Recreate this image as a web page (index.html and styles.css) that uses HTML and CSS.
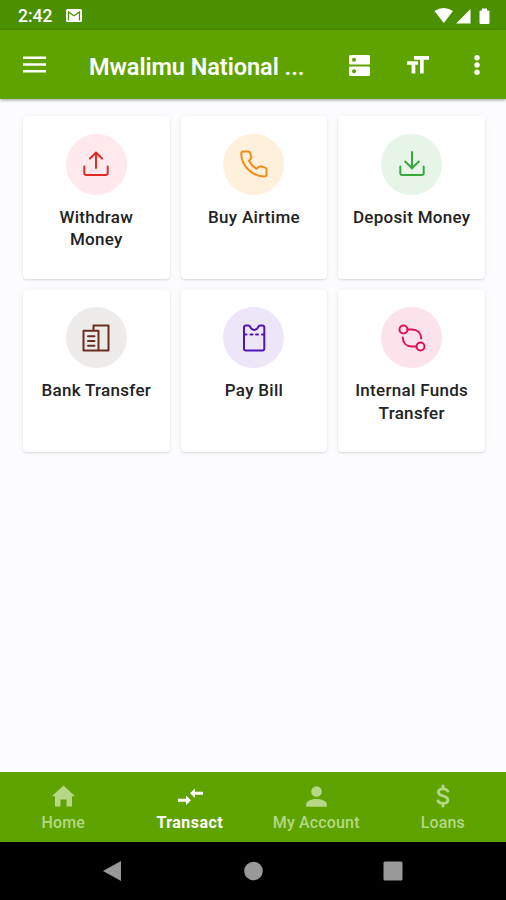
FILE: index.html
```html
<!DOCTYPE html>
<html lang="en">

<head>
    <meta charset="UTF-8">
    <meta name="viewport" content="width=device-width, initial-scale=1.0">
    <title>Mwalimu National - Transact</title>
    <link rel="stylesheet" href="styles.css">
</head>

<body>
    <!-- Status Bar -->
    <div class="status-bar">
        <span class="time">2:42</span>
        <svg class="mail" width="16" height="13" viewBox="0 0 16 13">
            <rect width="16" height="13" rx="1.5" fill="#fff"/>
            <path d="M2.500 11.500V3L8 6.800 13.500 3v8.500" fill="none" stroke="#4b9000" stroke-width="1.200"/>
        </svg>
        <svg class="signals" width="58" height="18" viewBox="0 0 58 18">
            <path d="M0.500 4Q9.500-2 19 4L9.800 16z M22 16.500L36.500 2v14.500z M45.500 4.500q0-1 1-1H48V1.500h5v2h1.500q1 0 1 1v11.500q0 1-1 1h-8q-1 0-1-1z" fill="#fff"/>
        </svg>
    </div>

    <!-- App Header -->
    <header>
        <button class="menu" aria-label="Menu">
            <svg width="23" height="17" viewBox="0 0 23 17">
                <path d="M0 1.800h23M0 8.500h23M0 15.200h23" stroke="#fff" stroke-width="2.600"/>
            </svg>
        </button>
        <h1>Mwalimu National ...</h1>
        <button class="accounts" aria-label="Accounts">
            <svg width="21" height="21" viewBox="0 0 21 21">
                <rect width="21" height="9.500" rx="1" fill="#fff"/>
                <rect y="11.500" width="21" height="9.500" rx="1" fill="#fff"/>
                <circle cx="5" cy="4.800" r="2" fill="#5fa300"/>
                <circle cx="5" cy="16.200" r="2" fill="#5fa300"/>
            </svg>
        </button>
        <button class="text-size" aria-label="Text size">
            <svg width="22" height="18" viewBox="0 0 22 18">
                <path d="M7 0h15v3.700h-5.300V17.500H13V3.700H7z M0 5.200h11v3.600H8.300v8.700H4.600V8.800H0z" fill="#fff"/>
            </svg>
        </button>
        <button class="more" aria-label="More">
            <svg width="6" height="20" viewBox="0 0 6 20">
                <circle cx="3" cy="2.800" r="2.700" fill="#fff"/>
                <circle cx="3" cy="10" r="2.700" fill="#fff"/>
                <circle cx="3" cy="17.200" r="2.700" fill="#fff"/>
            </svg>
        </button>
    </header>

    <!-- Transaction Cards -->
    <main>
        <div class="card">
            <div class="icon red">
                <svg width="28" height="28" viewBox="0 0 28 28">
                    <path d="M14 18V2.500M8 8.500L14 2.500l6 6M2.300 16.500v6.500q0 2 2 2h19.400q2 0 2-2v-6.500"/>
                </svg>
            </div>
            <p>Withdraw<br>Money</p>
        </div>
        <div class="card">
            <div class="icon orange">
                <svg width="28" height="28" viewBox="0 0 28 28">
                    <path d="M3.200 1.500h5q1.400 0 1.800 1.300l1.300 4.200q.3 1.100-.5 1.900L9 11q2.500 4.900 7.500 7.800l2.500-2.100q.8-.7 1.800-.4l4.300 1.300q1.400.5 1.400 1.900v4.800q0 2.200-2.200 2.200C12.500 26.500 1.500 16 1.200 3.700q0-2.200 2-2.200z"/>
                </svg>
            </div>
            <p>Buy Airtime</p>
        </div>
        <div class="card">
            <div class="icon green">
                <svg width="28" height="28" viewBox="0 0 28 28">
                    <path d="M14 2v16.500M7.200 11.500L14 18.300l6.800-6.800M2.300 16.500v6.500q0 2 2 2h19.400q2 0 2-2v-6.500"/>
                </svg>
            </div>
            <p>Deposit Money</p>
        </div>
        <div class="card">
            <div class="icon brown">
                <svg width="28" height="28" viewBox="0 0 28 28">
                    <path d="M11.500 6.500V1.500h15v25H1.500V6.800h15v19.700M6 12.200h6.500M6 17h6.500M6 21.800h6.500"/>
                </svg>
            </div>
            <p>Bank Transfer</p>
        </div>
        <div class="card">
            <div class="icon purple">
                <svg width="28" height="28" viewBox="0 0 28 28">
                    <path d="M6 1.500H8.500q1 0 1.500 1c1.800 4.600 6.700 4.600 8.500 0q.5-1 1.500-1h2.300q2 0 2 2v21q0 2-2 2H6q-2 0-2-2v-21q0-2 2-2z"/>
                    <path d="M5 10.500h1.500M10.500 10.500h2M16 10.500h2M22 10.500h1.500"/>
                </svg>
            </div>
            <p>Pay Bill</p>
        </div>
        <div class="card">
            <div class="icon pink">
                <svg width="28" height="28" viewBox="0 0 28 28">
                    <circle cx="5.500" cy="5.500" r="4"/>
                    <circle cx="22.500" cy="22.500" r="4"/>
                    <path d="M9.500 5.500h4.500c5.500 0 9 3.500 9.300 9M18.500 22.500H14c-5.500 0-9-3.500-9.300-9"/>
                </svg>
            </div>
            <p>Internal Funds<br>Transfer</p>
        </div>
    </main>

    <!-- Bottom Tabs -->
    <nav class="tabs">
        <a class="tab">
            <svg width="24" height="24" viewBox="0 0 24 24">
                <path d="M12.500 1.500L.8 12.200H4V22.500h5.500V15.500h6v7H21V12.200h3z"/>
            </svg>
            <span>Home</span>
        </a>
        <a class="tab active">
            <svg width="26" height="24" viewBox="0 0 26 24">
                <path d="M1 14.800h8V11.500l5 4.800-5 4.800v-3.300H1z M26 7.700h-8V4.400l-5 4.800 5 4.800v-3.300h8z"/>
            </svg>
            <span>Transact</span>
        </a>
        <a class="tab">
            <svg width="24" height="24" viewBox="0 0 24 24">
                <circle cx="12.500" cy="7.500" r="5.300"/>
                <path d="M2.200 22.800v-2.500C2.200 16.800 8 15.100 12.500 15.100S22.800 16.800 22.800 20.300v2.500z"/>
            </svg>
            <span>My Account</span>
        </a>
        <a class="tab">
            <svg class="line" width="24" height="24" viewBox="0 0 24 24">
                <path d="M17 8.300C16.600 5.900 14.800 4.800 12 4.800c-3 0-4.600 1.400-4.600 3.300 0 2.300 1.800 3.100 4.600 3.800 3 .8 4.900 1.900 4.900 4.100 0 2.200-1.900 3.400-4.900 3.400-3.100 0-5-1.300-5.200-3.800M12 .8v4M12 19.300v4"/>
            </svg>
            <span>Loans</span>
        </a>
    </nav>

    <!-- System Navigation -->
    <div class="system-nav">
        <svg width="20" height="22" viewBox="0 0 20 22">
            <path d="M18 1v20L0 11z"/>
        </svg>
        <svg width="20" height="20" viewBox="0 0 20 20">
            <circle cx="10.500" cy="10" r="9.300"/>
        </svg>
        <svg width="20" height="20" viewBox="0 0 20 20">
            <rect x=".5" y=".5" width="19" height="19" rx="1.500"/>
        </svg>
    </div>
</body>

</html>
```
FILE: styles.css
```css
* {
    box-sizing: border-box;
}

body {
    display: flex;
    flex-direction: column;
    height: 900px;
    margin: 0;
    font-family: Roboto, sans-serif;
    background-color: #fcfcff;
    color: #222;
}

.status-bar {
    display: flex;
    align-items: center;
    height: 30px;
    padding: 1px 14px 0 18px;
    background-color: #4b9000;
    color: white;
}

.time {
    width: 48px;
    font-size: 17.5px;
    font-weight: 500;
}

.signals {
    margin-left: auto;
}

header {
    display: flex;
    align-items: center;
    height: 69px;
    padding: 0 26px 0 23px;
    background-color: #5fa300;
    color: white;
    box-shadow: 0 1px 3px rgba(0, 0, 0, 0.4);
}

button {
    display: flex;
    padding: 0;
    border: none;
    background: none;
}

h1 {
    width: 260px;
    margin: 4px 0 0 43px;
    font-size: 23.5px;
    font-weight: 600;
    letter-spacing: -0.05px;
    white-space: nowrap;
}

.accounts {
    margin-top: 1px;
}

.text-size {
    margin-left: 37px;
}

.more {
    margin-left: auto;
}

main {
    display: grid;
    grid-template-columns: repeat(3, 1fr);
    grid-auto-rows: 162.5px;
    gap: 11px;
    flex: 1;
    align-content: start;
    padding: 17px 21px 0 23px;
}

.card {
    padding-top: 17.5px;
    background-color: white;
    border-radius: 4px;
    box-shadow: 0 1px 2px rgba(0, 0, 0, 0.12), 0 0 8px rgba(0, 0, 0, 0.04);
    text-align: center;
}

.card p {
    margin: 11px 0 0;
    font-size: 17px;
    font-weight: 500;
    line-height: 22.5px;
    letter-spacing: 0.3px;
}

.icon {
    display: flex;
    align-items: center;
    justify-content: center;
    width: 61px;
    height: 61px;
    margin: 0 auto;
    border-radius: 50%;
}

.icon svg {
    fill: none;
    stroke: currentColor;
    stroke-width: 2;
    stroke-linecap: round;
    stroke-linejoin: round;
}

.red {
    background-color: #ffe9ed;
    color: #e02a25;
}

.orange {
    background-color: #fff0dc;
    color: #f38b15;
}

.green {
    background-color: #e7f5e9;
    color: #38a83c;
}

.brown {
    background-color: #eeebeb;
    color: #6b2f20;
}

.purple {
    background-color: #ece6f8;
    color: #5115b5;
}

.pink {
    background-color: #fce2eb;
    color: #da1453;
}

/* Bottom navigation */
.tabs {
    display: grid;
    grid-template-columns: repeat(4, 1fr);
    height: 70px;
    background-color: #5fa300;
}

.tab {
    display: flex;
    flex-direction: column;
    align-items: center;
    padding-top: 12px;
    color: #b4d885;
    font-size: 16px;
    font-weight: 500;
    line-height: 24px;
    letter-spacing: 0.15px;
    white-space: nowrap;
}

.tab svg {
    display: block;
    margin-bottom: 3px;
    fill: currentColor;
}

.tab .line {
    fill: none;
    stroke: currentColor;
    stroke-width: 2.8;
}

.active {
    color: white;
    font-weight: 700;
    letter-spacing: 0.45px;
}

.system-nav {
    display: flex;
    align-items: center;
    justify-content: center;
    gap: 120px;
    height: 58px;
    background-color: black;
}

.system-nav svg {
    fill: #999;
}
```
